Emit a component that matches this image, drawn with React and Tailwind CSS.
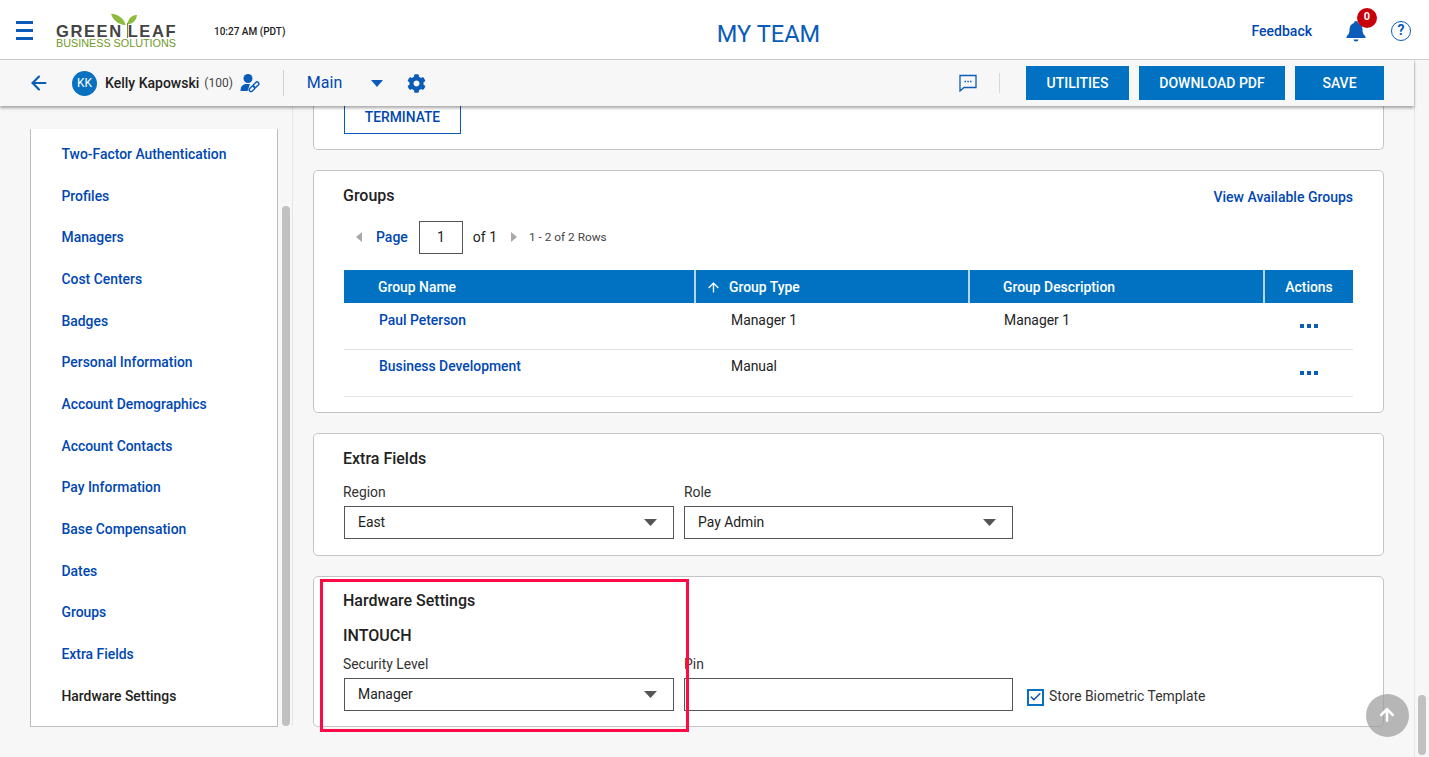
import React from "react";
import { ArrowLeft, ArrowUp, Check } from "lucide-react";
import { FaCog } from "react-icons/fa";

const nav = ["Two-Factor Authentication","Profiles","Managers","Cost Centers","Badges","Personal Information","Account Demographics","Account Contacts","Pay Information","Base Compensation","Dates","Groups","Extra Fields"];

function Caret({ className = "", w = 13, h = 7 }) {
  return <svg width={w} height={h} viewBox="0 0 14 7" preserveAspectRatio="none" className={className}><path d="M0 0h14L7 7z" fill="currentColor" /></svg>;
}

function Select({ value, className = "" }) {
  return (
    <div className={`h-[33px] border border-[#555] flex items-center justify-between pl-[13px] pr-[16px] text-[13.9px] text-[#222] ${className}`}>
      <span>{value}</span>
      <Caret className="text-[#555]" />
    </div>
  );
}

function Card({ className = "", children }) {
  return <section className={`bg-white border border-[#c4c4c4] rounded-[5px] px-[30px] ${className}`}>{children}</section>;
}

function Logo() {
  return (
    <div className="relative w-[122px] h-[48px] ml-[23px] shrink-0">
      <svg width="27" height="13" viewBox="0 0 27 16" preserveAspectRatio="none" className="absolute left-[55px] top-[7px]">
        <path d="M14.500 15C13.500 7 7 1.500 0 1c2 8 7 13 14.500 14z" fill="#8dbb3d" />
        <path d="M16.500 14C17 7 20 3 26 2c-.5 7-4 11-9.500 12z" fill="#8dbb3d" />
      </svg>
      <div className="absolute left-0 top-[18px] text-[16.5px] font-bold leading-[14px] tracking-[1.6px] text-[#444] whitespace-nowrap font-['Liberation_Sans',sans-serif]">GREEN<span className="inline-block w-[5px]" />LEAF</div>
      <div className="absolute left-[71px] top-[17px] w-px h-[15px] bg-[#6d8f2f]" />
      <div className="absolute left-0 top-[32px] text-[10.8px] leading-[11px] text-[#6e9a2a] whitespace-nowrap font-['Liberation_Sans',sans-serif]">BUSINESS SOLUTIONS</div>
    </div>
  );
}

export default function App() {
  return (
    <div className="relative w-[1429px] h-[757px] overflow-hidden bg-[#f7f7f7] font-['Roboto',sans-serif] text-[#222]">
      <header className="h-[60px] bg-white border-b border-[#cfcfcf] flex items-center relative">
        <div className="ml-[16px] w-[17px] mt-[1px] flex flex-col gap-[5px]">
          <span className="h-[3px] bg-[#0a5cb8]" /><span className="h-[3px] bg-[#0a5cb8]" /><span className="h-[3px] bg-[#0a5cb8]" />
        </div>
        <Logo />
        <span className="ml-[36px] text-[10px] font-medium text-[#222] whitespace-nowrap mt-[4px]">10:27 AM (PDT)</span>
        <h1 className="flex-1 text-center text-[23.6px] font-normal text-[#0a5cb8] mt-[11px]">MY TEAM</h1>
        <span className="text-[14px] font-medium text-[#0047b3] mt-[3px]">Feedback</span>
        <div className="relative ml-[34px] mr-[25px] mt-[2px]">
          <svg width="20" height="22" viewBox="0 0 20 22"><path d="M10 1a2 2 0 0 0-2 2C4.800 4 3.500 6.500 3.500 10c0 3-1 4.500-3 6.500V18h19v-1.500c-2-2-3-3.500-3-6.500 0-3.500-1.300-6-4.500-7a2 2 0 0 0-2-2zM7.500 19.500h5a2.500 2 0 0 1-5 0z" fill="#0a5cb8"/></svg>
          <span className="absolute left-[11px] top-[-12px] w-[20px] h-[20px] rounded-full bg-[#c8000c] text-white text-[11px] font-bold flex items-center justify-center">0</span>
        </div>
        <span className="w-[20px] h-[20px] mr-[18px] mt-[2px] rounded-full border-[1.5px] border-[#0a5cb8] text-[#0a5cb8] text-[14px] font-bold flex items-center justify-center">?</span>
      </header>

      <div className="flex h-[697px]">
        <div className="w-[1414px] relative shrink-0">
          <div className="relative z-10 h-[46px] bg-[#f7f7f7] shadow-[0_2px_3px_rgba(0,0,0,0.35)] flex items-center">
            <ArrowLeft size={22} strokeWidth={2.4} className="ml-[28px] text-[#0a5cb8]" />
            <span className="ml-[22px] w-[25px] h-[25px] rounded-full bg-[#0a70c0] text-white text-[12px] flex items-center justify-center">KK</span>
            <span className="ml-[8px] text-[14px] font-medium">Kelly Kapowski</span>
            <span className="ml-[5px] text-[12px] text-[#444]">(100)</span>
            <svg width="20" height="20" viewBox="0 0 20 20" className="ml-[7px] text-[#0a5cb8]">
              <circle cx="8" cy="5.500" r="4.500" fill="currentColor" />
              <path d="M0.500 18c0-5 2.500-7 6-7h3.500L7.500 18z" fill="currentColor" />
              <g fill="none" stroke="currentColor" strokeWidth="1.400">
                <rect x="9" y="14" width="6.500" height="3.600" rx="1.800" transform="rotate(-45 12 16)" />
                <rect x="13" y="10" width="6.500" height="3.600" rx="1.800" transform="rotate(-45 16 12)" />
              </g>
            </svg>
            <span className="ml-[23px] w-px h-[26px] bg-[#cfcfcf]" />
            <span className="ml-[23px] text-[16px] text-[#0047b3]">Main</span>
            <Caret className="ml-[29px] text-[#0a5cb8]" w={12} h={7} />
            <FaCog size={19} className="ml-[24px] text-[#0a5cb8]" />
            <div className="flex-1" />
            <svg width="18" height="18" viewBox="0 0 18 18" className="text-[#0a5cb8]"><path d="M1 1.500h16v12H5L1 17z" fill="none" stroke="currentColor" strokeWidth="1.300" /><path d="M5.500 7.500h1.500M8.300 7.500h1.500M11 7.500h1.500" stroke="currentColor" strokeWidth="1.500" /></svg>
            <span className="ml-[22px] w-px h-[20px] bg-[#d8d8d8]" />
            <button className="ml-[26px] w-[103px] h-[34px] bg-[#0172c2] text-white text-[14px] font-medium">UTILITIES</button>
            <button className="ml-[10px] w-[146px] h-[34px] bg-[#0172c2] text-white text-[14px] font-medium">DOWNLOAD PDF</button>
            <button className="ml-[10px] w-[89px] h-[34px] bg-[#0172c2] text-white text-[14px] font-medium">SAVE</button>
            <span className="w-[30px]" />
          </div>

          <div className="flex h-[651px] overflow-hidden">
            <aside className="ml-[30px] mt-[23px] w-[248px] h-[598px] bg-white border-x border-b border-[#bdbdbd] pt-[4.600px] shrink-0">
              {nav.map((n) => (
                <div key={n} className="h-[41.680px] pl-[30.500px] flex items-center text-[13.9px] font-medium text-[#0047b3]">{n}</div>
              ))}
              <div className="h-[41.680px] pl-[30.500px] flex items-center text-[13.9px] font-medium text-[#222]">Hardware Settings</div>
            </aside>
            <div className="ml-[4px] mt-[100px] mb-[31px] w-[8px] rounded-full bg-[#c1c1c1] shrink-0" />
            <div className="ml-[2px] w-px bg-[#e6e6e6] mb-[31px] shrink-0" />
            <main className="ml-[20px] w-[1071px] flex flex-col gap-[20px] shrink-0">
              <Card className="h-[44px] border-t-0 rounded-t-none">
                <button className="block w-[117px] h-[28px] bg-white border border-[#0a5cb8] border-t-0 text-[13.8px] font-medium text-[#0047b3] pb-[5px]">TERMINATE</button>
              </Card>

              <Card className="h-[243px] pt-[15px]">
                <div className="flex justify-between items-center h-[20px]">
                  <span className="-ml-px text-[16px] font-medium leading-[20px] text-[#222]">Groups</span>
                  <span className="text-[14px] font-medium text-[#0047b3] mt-[2px]">View Available Groups</span>
                </div>
                <div className="flex items-center h-[33px] mt-[15px] text-[14px]">
                  <svg width="6" height="10" viewBox="0 0 6 10" className="ml-[12px] mb-[2px]"><path d="M6 0v10L0 5z" fill="#a9a9a9"/></svg>
                  <span className="ml-[14px] font-medium text-[#0047b3]">Page</span>
                  <span className="ml-[11px] w-[44px] h-[33px] border border-[#555] flex items-center justify-center">1</span>
                  <span className="ml-[10px]">of 1</span>
                  <svg width="6" height="10" viewBox="0 0 6 10" className="ml-[14px] mb-[2px]"><path d="M0 0v10l6-5z" fill="#a9a9a9"/></svg>
                  <span className="ml-[12px] text-[11.8px] text-[#444]">1 - 2 of 2 Rows</span>
                </div>
                <div className="mt-[16px] grid grid-cols-[352px_274px_295px_88px] w-[1009px]">
                  <div className="h-[33px] bg-[#0172c2] border-r-2 border-[#b9d4ea] flex items-center pl-[34px] pt-[1px] text-[13.9px] font-medium text-white">Group Name</div>
                  <div className="h-[33px] bg-[#0172c2] border-r-2 border-[#b9d4ea] flex items-center pl-[10px] pt-[1px] text-[13.9px] font-medium text-white"><ArrowUp size={15} strokeWidth={2.2} className="mr-[8px]" />Group Type</div>
                  <div className="h-[33px] bg-[#0172c2] border-r-2 border-[#b9d4ea] flex items-center pl-[33px] pt-[1px] text-[13.9px] font-medium text-white">Group Description</div>
                  <div className="h-[33px] bg-[#0172c2] flex items-center justify-center pt-[1px] text-[13.9px] font-medium text-white">Actions</div>
                  {[["Paul Peterson","Manager 1","Manager 1","pt-[7px]"],["Business Development","Manual","","pt-[6px]"]].map((r) => (
                    <React.Fragment key={r[0]}>
                      <div className={`h-[47px] border-b border-[#e3e3e3] pl-[35px] ${r[3]} text-[13.9px] font-medium text-[#0047b3]`}>{r[0]}</div>
                      <div className={`h-[47px] border-b border-[#e3e3e3] pl-[35px] ${r[3]} text-[13.9px]`}>{r[1]}</div>
                      <div className={`h-[47px] border-b border-[#e3e3e3] pl-[34px] ${r[3]} text-[13.9px]`}>{r[2]}</div>
                      <div className="h-[47px] border-b border-[#e3e3e3] flex justify-center gap-[3px] pt-[21px]">
                        <i className="w-[4px] h-[4px] bg-[#0a5cb8]" /><i className="w-[4px] h-[4px] bg-[#0a5cb8]" /><i className="w-[4px] h-[4px] bg-[#0a5cb8]" />
                      </div>
                    </React.Fragment>
                  ))}
                </div>
              </Card>

              <Card className="h-[123px] pt-[15px]">
                <h2 className="-ml-px text-[16px] font-medium leading-[20px] text-[#222]">Extra Fields</h2>
                <div className="flex gap-[10px] mt-[14px]">
                  <div className="w-[330px]"><div className="-ml-px text-[13.9px] leading-[18px] text-[#333]">Region</div><Select value="East" className="mt-[5px]" /></div>
                  <div className="w-[329px]"><div className="text-[13.9px] leading-[18px] text-[#333]">Role</div><Select value="Pay Admin" className="mt-[5px]" /></div>
                </div>
              </Card>

              <Card className="h-[151px] pt-[14px]">
                <h2 className="-ml-px text-[16px] font-medium leading-[20px] text-[#222]">Hardware Settings</h2>
                <h3 className="-ml-px text-[16px] font-medium leading-[20px] text-[#222] mt-[15px]">INTOUCH</h3>
                <div className="flex gap-[10px] mt-[9px]">
                  <div className="w-[330px]"><div className="-ml-px text-[13.9px] leading-[18px] text-[#333]">Security Level</div><Select value="Manager" className="mt-[5px]" /></div>
                  <div className="w-[329px]"><div className="text-[13.9px] leading-[18px] text-[#333]">Pin</div><div className="mt-[5px] h-[33px] border border-[#555]" /></div>
                  <div className="flex items-center mt-[32px] ml-[4px] h-[20px] self-start">
                    <span className="w-[17px] h-[17px] border-2 border-[#0a70c0] flex items-center justify-center"><Check size={14} strokeWidth={2.4} className="text-[#0047b3]" /></span>
                    <span className="ml-[5px] mb-[1px] text-[13.9px] text-[#333]">Store Biometric Template</span>
                  </div>
                </div>
              </Card>
            </main>
          </div>
        </div>
        <div className="flex-1 border-l border-[#e6e6e6] relative">
          <div className="absolute left-[3px] top-[635px] w-[8px] h-[60px] rounded-full bg-[#c1c1c1]" />
        </div>
      </div>

      <div className="absolute left-[1365.500px] top-[693.500px] w-[43px] h-[43px] rounded-full bg-[#9a9a9a]/70 flex items-center justify-center">
        <ArrowUp size={20} strokeWidth={3} className="text-white" />
      </div>
      <div className="absolute left-[320px] top-[579px] w-[369px] h-[153px] border-[3px] border-[#ff0a47] pointer-events-none" />
    </div>
  );
}
